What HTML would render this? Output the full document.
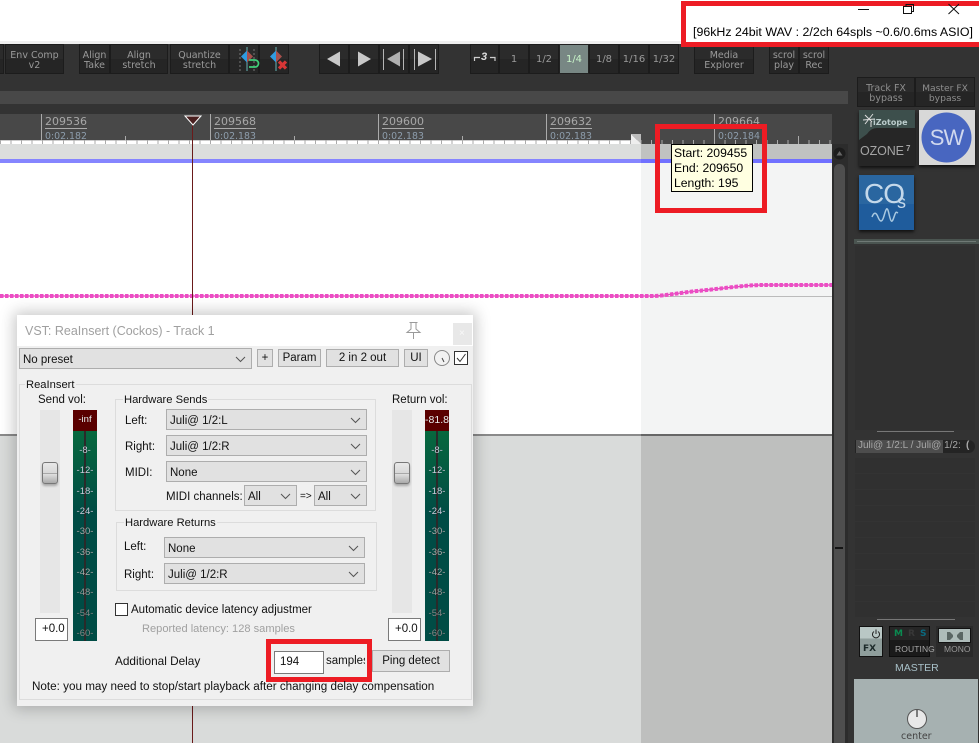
<!DOCTYPE html>
<html><head><meta charset="utf-8"><style>
html,body{margin:0;padding:0;background:#333}
#r{position:relative;width:979px;height:743px;overflow:hidden;background:#333;font-family:"Liberation Sans",sans-serif}
#r div,#r svg{position:absolute;box-sizing:border-box}
.b{top:44px;height:30px;background:linear-gradient(#2b2b2b 0 50%,#252525 50%);border:1px solid #1c1c1c;color:#9a9a9a;font:9.5px/9.5px "DejaVu Sans",sans-serif;text-align:center;padding-top:6px;white-space:nowrap;overflow:hidden}
.n{padding-top:10px;font-size:10px}
.t{white-space:nowrap;line-height:14px;color:#111;font-size:11.5px}
.rl{font:11px/12px "DejaVu Sans",sans-serif;color:#a8a8a8;top:116px;border-bottom:1px solid #aaa;height:13px;white-space:nowrap}
.rs{font:9.4px/11px "DejaVu Sans",sans-serif;color:#8d9dac;top:131px;height:9px;overflow:hidden;white-space:nowrap}
.c{background:#e1e1e1;border:1px solid #adadad;color:#111;font-size:11.5px;line-height:22px;padding-left:3px;white-space:nowrap}
.c svg{right:5px;top:7px}
.btn{background:#e1e1e1;border:1px solid #adadad;color:#111;font-size:11.5px;line-height:17px;text-align:center;white-space:nowrap}
.g{border:1px solid #dcdcdc}
.ml{font:9.5px/10px "Liberation Sans",sans-serif;color:#ccd;text-align:center;left:0;width:24px;text-shadow:0 0 1px #0006}
.row{left:855px;width:120px;height:15px;background:#303030}
</style></head><body><div id="r">

<div style="left:0;top:0;width:979px;height:41px;background:#fff"></div>
<div style="left:0;top:41px;width:979px;height:3px;background:#efefef"></div>

<div class="b" style="left:-20px;width:24px"></div>
<div class="b" style="left:5px;width:59px">Env Comp<br>v2</div>
<div class="b" style="left:79px;width:31px">Align<br>Take</div>
<div class="b" style="left:110px;width:58px">Align<br>stretch</div>
<div class="b" style="left:170px;width:59px">Quantize<br>stretch</div>
<div class="b" style="left:229px;width:30px"></div>
<div class="b" style="left:259px;width:30px"></div>
<svg style="left:229px;top:44px" width="60" height="30" viewBox="0 0 60 30">
<path d="M11 5V27" stroke="#777" stroke-dasharray="2 2"/><path d="M25 5V27" stroke="#777" stroke-dasharray="2 2"/>
<path d="M18 3V27" stroke="#5f9ea0" stroke-width="1.2"/>
<path d="M18 6.500 L12 12.500 L18 18.500Z" fill="#2f9be0"/><path d="M18 6.500 L24 12.500 L18 18.500Z" fill="#a8504c"/>
<path d="M20 16h6a3.500 3.500 0 0 1 0 7h-6" fill="none" stroke="#3fcf78" stroke-width="1.700"/>
<path d="M47 3V27" stroke="#5f9ea0" stroke-width="1.200"/>
<path d="M47 6.500 L41 12.500 L47 18.500Z" fill="#2f9be0"/><path d="M47 6.500 L53 12.500 L47 18.500Z" fill="#a8504c"/>
<path d="M50 17.500 L57 24.500 M57 17.500 L50 24.500" stroke="#d83636" stroke-width="3.200"/>
</svg>

<div class="b" style="left:319px;width:30px"></div>
<div class="b" style="left:349px;width:30px"></div>
<div class="b" style="left:379px;width:30px"></div>
<div class="b" style="left:409px;width:30px"></div>
<svg style="left:319px;top:44px" width="120" height="30" viewBox="0 0 120 30">
<path d="M8 15 L21 7.500 V22.500Z" fill="#c8c8c8"/>
<path d="M39 7.500 L52 15 L39 22.500Z" fill="#c8c8c8"/>
<path d="M64.500 5V26M84.500 5V26M95.500 5V26M116.500 5V26" stroke="#b5b5b5"/>
<path d="M68 15 L81 7.500 V22.500Z" fill="#b0b0b0"/>
<path d="M99 7.500 L113 15 L99 22.500Z" fill="#c8c8c8"/>
</svg>

<div class="b" style="left:470px;width:29px"></div>
<svg style="left:470px;top:44px" width="29" height="30" viewBox="0 0 29 30"><path d="M4.500 17V13.500H10M20 13.500H25V17" fill="none" stroke="#ccc" stroke-width="1.200"/></svg>
<div class="t" style="left:481px;top:50px;color:#ddd;font:italic bold 11px/14px 'Liberation Sans',sans-serif">3</div>
<div class="b n" style="left:499px;width:30px">1</div>
<div class="b n" style="left:529px;width:30px">1/2</div>
<div class="b n" style="left:559px;width:30px;background:#788784;color:#c9f5c9;border-color:#222">1/4</div>
<div class="b n" style="left:589px;width:30px">1/8</div>
<div class="b n" style="left:619px;width:30px">1/16</div>
<div class="b n" style="left:649px;width:30px">1/32</div>
<div class="b" style="left:694px;width:60px">Media<br>Explorer</div>
<div class="b" style="left:769px;width:30px">scrol<br>play</div>
<div class="b" style="left:799px;width:30px">scrol<br>Rec</div>

<div style="left:0;top:91px;width:848px;height:13px;background:#484848"></div>
<div style="left:0;top:114px;width:832px;height:30px;background:#484848"></div>

<div style="left:41px;top:114px;width:1px;height:26px;background:#aaa"></div>
<div style="left:210px;top:114px;width:1px;height:26px;background:#aaa"></div>
<div style="left:378px;top:114px;width:1px;height:26px;background:#aaa"></div>
<div style="left:546px;top:114px;width:1px;height:26px;background:#aaa"></div>
<div style="left:714px;top:114px;width:1px;height:26px;background:#aaa"></div>
<div style="left:125px;top:136px;width:1px;height:4px;background:#aaa"></div>
<div style="left:294px;top:136px;width:1px;height:4px;background:#aaa"></div>
<div style="left:462px;top:136px;width:1px;height:4px;background:#aaa"></div>
<div style="left:798px;top:136px;width:1px;height:4px;background:#aaa"></div>
<div class="rl" style="left:45px">209536</div><div class="rs" style="left:45px">0:02.182</div>
<div class="rl" style="left:214px">209568</div><div class="rs" style="left:214px">0:02.183</div>
<div class="rl" style="left:382px">209600</div><div class="rs" style="left:382px">0:02.183</div>
<div class="rl" style="left:550px">209632</div><div class="rs" style="left:550px">0:02.183</div>
<div class="rl" style="left:718px;border:0">209664</div><div class="rs" style="left:718px">0:02.184</div>

<div style="left:0;top:140px;width:641px;height:4px;background:#fff;border-top:1px solid #ccc"></div>
<div style="left:0;top:140px;width:832px;height:4px;background:repeating-linear-gradient(90deg,#aaa 0 1px,transparent 1px 10.5px);background-position:0 0"></div>
<svg style="left:631px;top:134px" width="11" height="11" viewBox="0 0 11 11"><path d="M0 0H10V10Z" fill="#bbb"/><path d="M0 0L10 10H0Z" fill="#eee"/></svg>

<div style="left:0;top:144px;width:641px;height:15px;background:#dcdedd"></div>
<div style="left:641px;top:144px;width:191px;height:15px;background:#c0c2c1"></div>
<div style="left:0;top:159px;width:641px;height:4px;background:#8585ff"></div>
<div style="left:641px;top:159px;width:191px;height:4px;background:#7070ff"></div>
<div style="left:0;top:163px;width:641px;height:271px;background:#fff"></div>
<div style="left:641px;top:163px;width:191px;height:271px;background:#f3f4f4"></div>
<div style="left:0;top:434px;width:641px;height:309px;background:#d9dbda;border-top:2px solid #8a8a8a"></div>
<div style="left:641px;top:434px;width:191px;height:309px;background:#bebfbe;border-top:2px solid #666"></div>

<div style="left:650px;top:296px;width:182px;height:1px;background:#bbb"></div>
<svg style="left:0;top:280px" width="832" height="24" viewBox="0 0 832 24">
<path d="M0 16H655C670 15 685 12 700 10.700S745 5 762 5H832" fill="none" stroke="#e040b8" stroke-width="1.200"/>
<path d="M0 16H655C670 15 685 12 700 10.700S745 5 762 5H832" fill="none" stroke="#ec4cc4" stroke-width="4" stroke-dasharray="3.500 1.500"/>
</svg>

<div style="left:192px;top:125px;width:1px;height:618px;background:#6a1a1a"></div>
<svg style="left:184px;top:115px" width="18" height="11" viewBox="0 0 18 11"><path d="M1 1H17L9 10Z" fill="#4a2020" stroke="#fff"/></svg>

<div style="left:832px;top:144px;width:16px;height:599px;background:#2c2c2c"></div>
<div style="left:834px;top:164px;width:11px;height:579px;background:#4e4e4e;border-radius:5px 5px 0 0"></div>
<svg style="left:833px;top:147px" width="13" height="13" viewBox="0 0 13 13"><circle cx="6.500" cy="6.500" r="6" fill="#1c1c1c"/><path d="M6.500 4L9.500 8.500H3.500Z" fill="#666"/></svg>
<div style="left:835px;top:547px;width:8px;height:2px;background:#151515"></div>

<div style="left:671px;top:144px;width:82px;height:48px;background:#ffffe1;border:1px solid #000"></div>
<div class="t" style="left:674px;top:146px;font-size:12.200px;line-height:15px;color:#000">Start: 209455<br>End: 209650<br>Length: 195</div>

<div style="left:660px;top:129px;width:102px;height:79px;outline:5px solid #ed1c24"></div>

<div style="left:686px;top:0;width:293px;height:42px;background:#fff"></div>
<div style="left:681px;top:1px;width:303px;height:46px;border:5px solid #ed1c24"></div>
<svg style="left:850px;top:0" width="120" height="18" viewBox="0 0 120 18">
<path d="M8 9.500H19" stroke="#111"/>
<path d="M53.500 6.500H61.500V13.500H53.500ZM56 6.500V4.500H63.500V11.500H61.500" fill="none" stroke="#111"/>
<path d="M98.500 4L109 14M109 4L98.500 14" stroke="#111"/>
</svg>
<div class="t" style="left:693px;top:25px;font-size:12.400px;color:#000">[96kHz 24bit WAV : 2/2ch 64spls ~0.6/0.6ms ASIO]</div>

<div class="b" style="left:857px;top:77px;width:58px;color:#8e8e8e">Track FX<br>bypass</div>
<div class="b" style="left:915px;top:77px;width:60px;color:#8e8e8e;font-size:9.200px">Master FX<br>bypass</div>

<div style="left:859px;top:110px;width:56px;height:56px;background:#262626;box-shadow:0 2px 3px #111"></div>
<svg style="left:859px;top:110px" width="56" height="56" viewBox="0 0 56 56">
<path d="M0 0H56V18H18Q12 18 8 24L0 30Z" fill="#3d4f4c"/>
<path d="M6 5L13 12M14 4L6 14M4 10L16 9M12 12L12 17" stroke="#ddd" stroke-width="1"/>
<text x="14" y="15" font-family="DejaVu Sans" font-weight="bold" font-size="8" fill="#bcc">iZotope</text>
<text x="1" y="45" font-family="Liberation Sans" font-size="12.500" fill="#a5a5a5" textLength="44">OZONE</text>
<text x="47" y="41" font-family="Liberation Sans" font-weight="bold" font-size="8" fill="#a5a5a5">7</text>
</svg>
<div style="left:919px;top:110px;width:56px;height:55px;background:#d8d8d8;box-shadow:0 2px 3px #111"></div>
<svg style="left:919px;top:110px" width="56" height="55" viewBox="0 0 56 55">
<circle cx="27.500" cy="27.500" r="25" fill="#4866c0"/>
<text x="27.500" y="35" text-anchor="middle" font-family="Liberation Sans" font-size="22" fill="#d0d8ee" letter-spacing="-1">SW</text>
</svg>
<div style="left:859px;top:175px;width:55px;height:55px;background:linear-gradient(#2a66a0 0 53%,#1f5c9c 53%);box-shadow:0 2px 3px #111"></div>
<svg style="left:859px;top:175px" width="55" height="55" viewBox="0 0 55 55">
<text x="5" y="28" font-family="Liberation Sans" font-size="28" fill="#c4d8ea" letter-spacing="-1">CO</text>
<text x="38" y="33" font-family="Liberation Sans" font-size="18" fill="#c4d8ea">s</text>
<path d="M13 42C15 37 17 37 19 42S23 48 25 41 28 30 30 39 33 48 35 42 37 37 39 38" fill="none" stroke="#a8c8e0" stroke-width="1.500"/>
</svg>

<div style="left:854px;top:239px;width:125px;height:5px;background:#4a5450"></div>
<div style="left:857px;top:241px;width:119px;height:1px;background:#6f7975"></div>
<div style="left:855px;top:246px;width:120px;height:184px;background:#303030"></div>
<div style="left:877px;top:431px;width:77px;height:1px;background:#777"></div>

<div style="left:855px;top:440px;width:120px;height:13px;background:#242424;border-radius:0 7px 7px 0"></div>
<div style="left:856px;top:440px;width:87px;height:13px;background:#4d4d4d"></div>
<div class="t" style="left:858px;top:439px;font-size:10px;color:#a8a8a8">Juli@ 1/2:L / Juli@ 1/2:</div>
<div class="t" style="left:966px;top:439px;font-size:10px;font-weight:bold;color:#aaa">(</div>

<div class="row" style="top:458px"></div><div class="row" style="top:474px"></div><div class="row" style="top:490px"></div><div class="row" style="top:506px"></div><div class="row" style="top:522px"></div><div class="row" style="top:538px"></div><div class="row" style="top:554px"></div><div class="row" style="top:570px"></div><div class="row" style="top:586px"></div><div class="row" style="top:602px"></div>
<div style="left:877px;top:619px;width:78px;height:1px;background:#777"></div>

<div style="left:859px;top:626px;width:24px;height:31px;background:linear-gradient(#b9c7c5 0 40%,#8f9e9c 40%);border:1px solid #111"></div>
<svg style="left:871px;top:629px" width="10" height="10" viewBox="0 0 10 10"><path d="M3 2.500A3.500 3.500 0 1 0 7 2.500M5 0.500V5" fill="none" stroke="#222" stroke-width="1"/></svg>
<div class="t" style="left:863px;top:642px;font:bold 9px/14px 'DejaVu Sans',sans-serif;color:#1c2a2a">FX</div>
<div style="left:889px;top:626px;width:41px;height:31px;background:linear-gradient(#262626 0 45%,#1a1a1a 45%);border:1px solid #0c0c0c"></div>
<div class="t" style="left:894px;top:627px;font:bold 9px/14px 'DejaVu Sans',sans-serif;color:#0a8a50">M</div>
<div class="t" style="left:908px;top:627px;font:bold 9px/14px 'DejaVu Sans',sans-serif;color:#383838">R</div>
<div class="t" style="left:920px;top:627px;font:bold 9px/14px 'DejaVu Sans',sans-serif;color:#0a6a80">S</div>
<div class="t" style="left:895px;top:642px;font:8.500px/14px 'Liberation Sans',sans-serif;letter-spacing:.1px;color:#a8a8a8">ROUTING</div>
<div style="left:936px;top:626px;width:37px;height:31px;background:#2a2a2a"></div>
<div style="left:938px;top:628px;width:33px;height:15px;background:#aebcba;border:1px solid #111"></div>
<svg style="left:946px;top:631px" width="18" height="10" viewBox="0 0 18 10"><path d="M1 1H4L7 4V6L4 9H1ZM17 1H14L11 4V6L14 9H17Z" fill="#5a6664"/></svg>
<div class="t" style="left:944px;top:642px;font:8.500px/14px 'Liberation Sans',sans-serif;color:#999">MONO</div>
<div class="t" style="left:895px;top:661px;font-size:10.500px;color:#a8c0c8">MASTER</div>

<div style="left:854px;top:679px;width:124px;height:64px;background:#a6b1b1"></div>
<svg style="left:906px;top:708px" width="22" height="22" viewBox="0 0 22 22"><circle cx="11" cy="11" r="9.500" fill="#e8e8e8" stroke="#555"/><path d="M11 2V9" stroke="#333" stroke-width="1.200"/></svg>
<div class="t" style="left:901px;top:730px;font:9.500px/14px 'DejaVu Sans',sans-serif;color:#444">center</div>

<!-- Dialog -->
<div style="left:17px;top:315px;width:456px;height:391px;background:#f0f0f0;box-shadow:0 0 14px 3px rgba(0,0,0,.22)"></div>
<div style="left:17px;top:315px;width:456px;height:31px;background:#fff"></div>
<div class="t" style="left:25px;top:324px;font-size:12.500px;color:#a0a0a0">VST: ReaInsert (Cockos) - Track 1</div>
<svg style="left:405px;top:321px" width="17" height="19" viewBox="0 0 17 19"><path d="M4.500 1.500H12.500M6 1.500V8L2 11.500H15L11 8V1.500M8.500 11.500V18" fill="none" stroke="#9a9a9a"/></svg>
<div style="left:453px;top:323px;width:19px;height:22px;background:#e8e8e8"></div>
<div class="t" style="left:459px;top:327px;font-size:10px;color:#f8f8f8">×</div>

<div class="c" style="left:19px;top:348px;width:233px;height:21px;padding-left:3px"><span>No preset</span><svg width="11" height="7" viewBox="0 0 11 7"><path d="M1 1L5.500 5.500L10 1" fill="none" stroke="#555"/></svg></div>
<div class="btn" style="left:257px;top:349px;width:16px;height:18px">+</div>
<div class="btn" style="left:278px;top:349px;width:43px;height:18px">Param</div>
<div class="btn" style="left:326px;top:349px;width:73px;height:18px">2 in 2 out</div>
<div class="btn" style="left:404px;top:349px;width:24px;height:18px">UI</div>
<svg style="left:433px;top:349px" width="18" height="19" viewBox="0 0 18 19"><circle cx="9" cy="9" r="7.500" fill="#f2f2f2" stroke="#888"/><path d="M9 9L11 13" stroke="#444"/></svg>
<svg style="left:454px;top:351px" width="15" height="14" viewBox="0 0 15 14"><rect x=".5" y=".5" width="13" height="13" fill="#fff" stroke="#333"/><path d="M3 7L6 10.500L11.500 3" fill="none" stroke="#333"/></svg>

<div class="g" style="left:19px;top:384px;width:453px;height:316px"></div>
<div class="t" style="left:25px;top:378px;background:#f0f0f0;padding:0 1px;font-size:11.200px">ReaInsert</div>
<div class="t" style="left:38px;top:393px">Send vol:</div>
<div class="t" style="left:392px;top:393px">Return vol:</div>

<div style="left:40px;top:410px;width:20px;height:203px;background:#e6e6e6"></div>
<div style="left:392px;top:410px;width:20px;height:203px;background:#e6e6e6"></div>
<div style="left:42px;top:462px;width:16px;height:22px;background:linear-gradient(#e8e8e8,#d8d8d8 50%,#777 52%,#e0e0e0 55%,#aaa);border:1px solid #777;border-radius:3px;box-shadow:0 2px 2px #0004"></div>
<div style="left:394px;top:462px;width:16px;height:22px;background:linear-gradient(#e8e8e8,#d8d8d8 50%,#777 52%,#e0e0e0 55%,#aaa);border:1px solid #777;border-radius:3px;box-shadow:0 2px 2px #0004"></div>

<div style="left:73px;top:410px;width:24px;height:231px;background:linear-gradient(#5a0000 0 21px,#07683e 21px,#004c45 45%,#004c45)">
<div style="left:11px;top:21px;width:2px;height:210px;background:#2a2a2a"></div>
<div class="ml" style="top:5px;color:#eee">-inf</div>
<div class="ml" style="top:36px">-8-</div><div class="ml" style="top:56px">-12-</div><div class="ml" style="top:77px">-18-</div><div class="ml" style="top:97px">-24-</div><div class="ml" style="top:117px;color:#aaa">-30-</div><div class="ml" style="top:138px;color:#aaa">-36-</div><div class="ml" style="top:158px;color:#aaa">-42-</div><div class="ml" style="top:178px;color:#999">-48-</div><div class="ml" style="top:199px;color:#888">-54-</div><div class="ml" style="top:219px;color:#888">-60-</div>
</div>
<div style="left:425px;top:410px;width:24px;height:231px;background:linear-gradient(#5a0000 0 21px,#07683e 21px,#004c45 45%,#004c45)">
<div style="left:11px;top:21px;width:2px;height:210px;background:#2a2a2a"></div>
<div class="ml" style="top:5px;color:#eee;font-size:10.500px">-81.8</div>
<div class="ml" style="top:36px">-8-</div><div class="ml" style="top:56px">-12-</div><div class="ml" style="top:77px">-18-</div><div class="ml" style="top:97px">-24-</div><div class="ml" style="top:117px;color:#aaa">-30-</div><div class="ml" style="top:138px;color:#aaa">-36-</div><div class="ml" style="top:158px;color:#aaa">-42-</div><div class="ml" style="top:178px;color:#999">-48-</div><div class="ml" style="top:199px;color:#888">-54-</div><div class="ml" style="top:219px;color:#888">-60-</div>
</div>
<div style="left:35px;top:618px;width:33px;height:23px;background:#fff;border:1px solid #7a7a7a"></div>
<div class="t" style="left:42px;top:622px">+0.0</div>
<div style="left:388px;top:618px;width:33px;height:23px;background:#fff;border:1px solid #7a7a7a"></div>
<div class="t" style="left:395px;top:622px">+0.0</div>

<div class="g" style="left:115px;top:399px;width:261px;height:112px"></div>
<div class="t" style="left:123px;top:393px;background:#f0f0f0;padding:0 1px;font-size:11.200px">Hardware Sends</div>
<div class="t" style="left:125px;top:414px">Left:</div>
<div class="t" style="left:125px;top:440px">Right:</div>
<div class="t" style="left:125px;top:466px">MIDI:</div>
<div class="c" style="left:166px;top:409px;width:201px;height:21px">Juli@ 1/2:L<svg width="11" height="7" viewBox="0 0 11 7"><path d="M1 1L5.500 5.500L10 1" fill="none" stroke="#555"/></svg></div>
<div class="c" style="left:166px;top:435px;width:201px;height:21px">Juli@ 1/2:R<svg width="11" height="7" viewBox="0 0 11 7"><path d="M1 1L5.500 5.500L10 1" fill="none" stroke="#555"/></svg></div>
<div class="c" style="left:166px;top:461px;width:201px;height:21px">None<svg width="11" height="7" viewBox="0 0 11 7"><path d="M1 1L5.500 5.500L10 1" fill="none" stroke="#555"/></svg></div>
<div class="t" style="left:166px;top:490px">MIDI channels:</div>
<div class="c" style="left:244px;top:485px;width:53px;height:21px">All<svg width="11" height="7" viewBox="0 0 11 7"><path d="M1 1L5.500 5.500L10 1" fill="none" stroke="#555"/></svg></div>
<div class="t" style="left:300px;top:490px;font-size:10px">=&gt;</div>
<div class="c" style="left:314px;top:485px;width:53px;height:21px">All<svg width="11" height="7" viewBox="0 0 11 7"><path d="M1 1L5.500 5.500L10 1" fill="none" stroke="#555"/></svg></div>

<div class="g" style="left:116px;top:522px;width:261px;height:69px"></div>
<div class="t" style="left:124px;top:516px;background:#f0f0f0;padding:0 1px;font-size:11.200px">Hardware Returns</div>
<div class="t" style="left:124px;top:540px">Left:</div>
<div class="t" style="left:124px;top:568px">Right:</div>
<div class="c" style="left:164px;top:537px;width:201px;height:21px">None<svg width="11" height="7" viewBox="0 0 11 7"><path d="M1 1L5.500 5.500L10 1" fill="none" stroke="#555"/></svg></div>
<div class="c" style="left:164px;top:563px;width:201px;height:21px">Juli@ 1/2:R<svg width="11" height="7" viewBox="0 0 11 7"><path d="M1 1L5.500 5.500L10 1" fill="none" stroke="#555"/></svg></div>

<div style="left:115px;top:603px;width:13px;height:13px;background:#fff;border:1px solid #333"></div>
<div class="t" style="left:131px;top:603px">Automatic device latency adjustmer</div>
<div class="t" style="left:142px;top:622px;color:#a0a0a0;font-size:11.100px">Reported latency: 128 samples</div>
<div class="t" style="left:115px;top:654px;font-size:11.800px">Additional Delay</div>
<div style="left:266px;top:639px;width:106px;height:43px;border:5px solid #ed1c24"></div>
<div style="left:274px;top:651px;width:50px;height:23px;background:#fff;border:1px solid #7a7a7a"></div>
<div class="t" style="left:280px;top:655px">194</div>
<div class="t" style="left:326px;top:654px;width:39px;overflow:hidden">samples</div>
<div class="btn" style="left:372px;top:650px;width:78px;height:22px;line-height:20px">Ping detect</div>
<div class="t" style="left:32px;top:680px;font-size:11.680px">Note: you may need to stop/start playback after changing delay compensation</div>

</div></body></html>
